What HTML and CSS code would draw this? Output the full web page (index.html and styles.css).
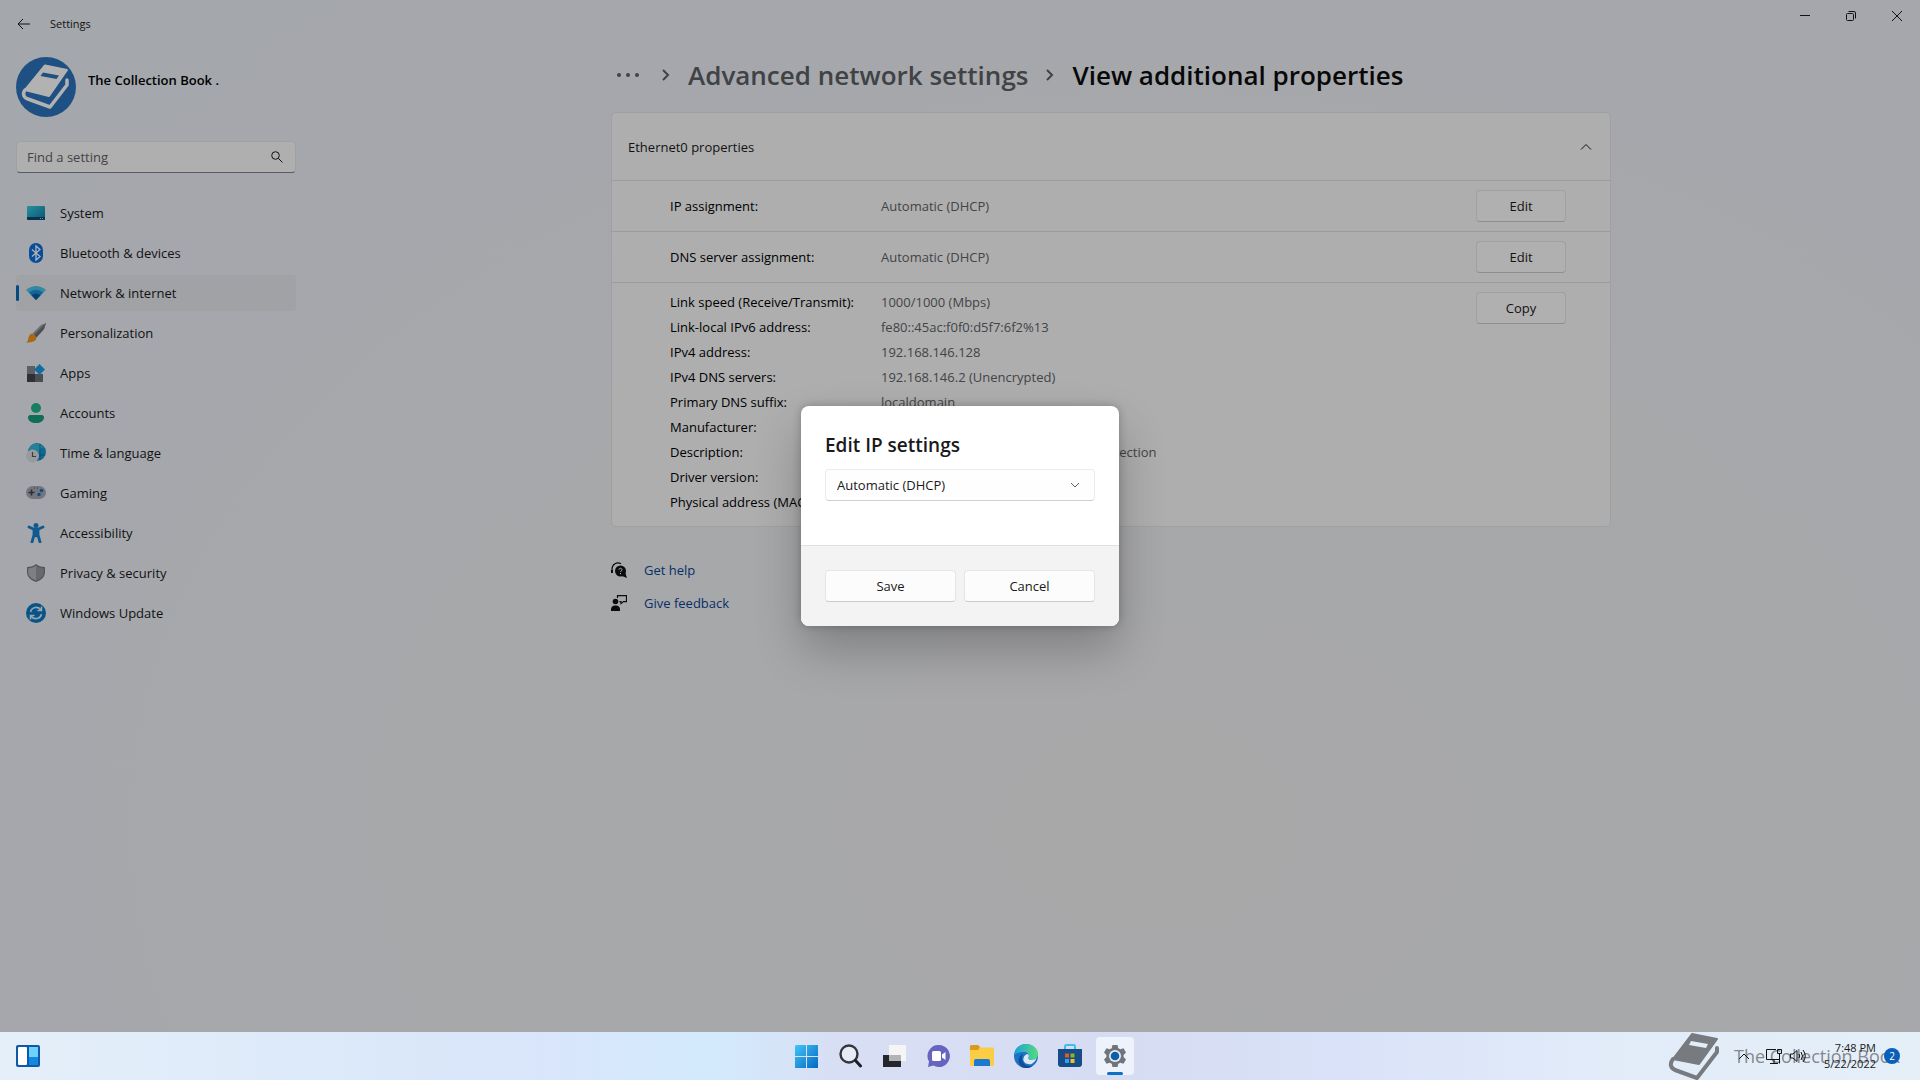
FILE: index.html
```html
<!DOCTYPE html>
<html lang="en">
  <head>
    <meta charset="UTF-8" />
    <meta name="viewport" content="width=device-width, initial-scale=1.0" />
    <title>Settings</title>
    <link rel="stylesheet" href="styles.css">
  </head>
  <body>
    <div class="window">
      <header class="titlebar">
        <button class="back" aria-label="Back">
          <svg width="14" height="12" viewBox="0 0 14 12"><path d="M13 6H1M6 1L1 6l5 5" /></svg>
        </button>
        <span class="app-name">Settings</span>
        <div class="window-controls">
          <button aria-label="Minimize">
            <svg width="10" height="10" viewBox="0 0 10 10"><path d="M0 4.5h10" /></svg>
          </button>
          <button aria-label="Restore">
            <svg width="10" height="10" viewBox="0 0 10 10"><rect x=".5" y="2.5" width="7" height="7" rx="1" /><path d="M2.5.5H8A1.5 1.5 0 0 1 9.500 2v5.500" /></svg>
          </button>
          <button aria-label="Close">
            <svg width="10" height="10" viewBox="0 0 10 10"><path d="M0 0l10 10M10 0L0 10" /></svg>
          </button>
        </div>
      </header>

      <div class="layout">
        <aside class="sidebar">
          <div class="profile">
            <svg class="avatar" width="60" height="60" viewBox="0 0 60 60">
              <circle cx="30" cy="30" r="30" fill="#2c73bd" />
              <path d="M29 8.500L51 13 33 39 9 33z" fill="#fff" stroke="#fff" stroke-width="2" stroke-linejoin="round" />
              <path d="M27 15.500l16 3-2.500 3.500-16-3z" fill="#2c73bd" />
              <path d="M9 33c-3 4-1 8 3 9l22 8 17-22v-5" fill="none" stroke="#fff" stroke-width="3.500" stroke-linejoin="round" stroke-linecap="round" />
            </svg>
            <span class="profile-name">The Collection Book .</span>
          </div>

          <div class="search">
            <input type="text" placeholder="Find a setting" aria-label="Find a setting" />
            <svg width="12" height="12" viewBox="0 0 12 12"><circle cx="4.500" cy="4.500" r="3.800" /><path d="M7.300 7.300L11.500 11.500" /></svg>
          </div>

          <nav class="menu">
            <a href="#">
              <svg width="20" height="20" viewBox="0 0 20 20">
                <defs><linearGradient id="sys" x1="0" y1="0" x2="1" y2="1"><stop offset="0" stop-color="#35d0e0" /><stop offset="1" stop-color="#1579a8" /></linearGradient></defs>
                <rect x="1" y="3" width="18" height="14" rx="1" fill="url(#sys)" />
                <path d="M1 14h18v2a1 1 0 0 1-1 1H2a1 1 0 0 1-1-1z" fill="#0c4a70" />
                <path d="M14 15.500h1M16 15.500h1" stroke="#9fd8e8" />
              </svg>
              System
            </a>
            <a href="#">
              <svg width="20" height="20" viewBox="0 0 20 20">
                <rect x="3" y="0" width="14" height="20" rx="7" fill="#0a6fe0" />
                <path d="M6 6.500l8 7-4 3.500V3l4 3.500-8 7" fill="none" stroke="#fff" stroke-width="1.300" />
              </svg>
              Bluetooth &amp; devices
            </a>
            <a href="#" class="active">
              <svg width="20" height="20" viewBox="0 0 20 20">
                <path d="M0 7Q10-1 20 7L10 17z" fill="#4cc3ea" />
                <path d="M3 9.500Q10 4 17 9.500L10 17z" fill="#1b91d6" />
                <path d="M5.500 12.200Q10 9 14.500 12.200L10 17z" fill="#0c5ca8" />
              </svg>
              Network &amp; internet
            </a>
            <a href="#">
              <svg width="20" height="20" viewBox="0 0 20 20">
                <path d="M20 0l-2 6-7.500 8.500-4-4L15 2z" fill="#9a9ca5" />
                <path d="M20 0l-12 12 2.500 2.500L18 6z" fill="#6e7078" />
                <path d="M6.500 10.500l4 4c0 3-3 5-10.500 5 2-1 2-3 2.500-5s2-4 4-4z" fill="#f2951e" />
              </svg>
              Personalization
            </a>
            <a href="#">
              <svg width="20" height="20" viewBox="0 0 20 20">
                <path d="M1 3h8v8H1z" fill="#84888f" />
                <path d="M1 11h8v8H1z" fill="#42464c" />
                <path d="M9 11h8v8H9z" fill="#6b6f76" />
                <path d="M13.500 1l5.500 5.500-5.500 5.500L8 6.500z" fill="#1e9be2" />
              </svg>
              Apps
            </a>
            <a href="#">
              <svg width="20" height="20" viewBox="0 0 20 20">
                <circle cx="10" cy="5" r="5" fill="#22b58c" />
                <path d="M4.500 12h11A2.500 2.500 0 0 1 18 14.500C18 18 14.500 20 10 20S2 18 2 14.500A2.500 2.500 0 0 1 4.500 12z" fill="#179d7c" />
              </svg>
              Accounts
            </a>
            <a href="#">
              <svg width="20" height="20" viewBox="0 0 20 20">
                <circle cx="11" cy="9" r="9" fill="#1899ce" />
                <path d="M3 6C6-1 15-1 18 4l-4 2-2 6-6-2z" fill="#35b9d8" />
                <path d="M14 1v16M11 12h8" stroke="#0c67a8" stroke-width=".8" />
                <circle cx="6.500" cy="13" r="6.500" fill="#dcdde0" />
                <path d="M6.500 9v4.500H10" fill="none" stroke="#54585e" stroke-width="1.200" />
              </svg>
              Time &amp; language
            </a>
            <a href="#">
              <svg width="20" height="20" viewBox="0 0 20 20">
                <rect y="3" width="20" height="13" rx="6.500" fill="#a5a9b2" />
                <path d="M5.500 6.500v6M2.500 9.500h6" stroke="#3f4349" stroke-width="1.600" />
                <path d="M8 5h1M11 5h1" stroke="#54585e" />
                <circle cx="15.500" cy="7.500" r="1.800" fill="#1c6ec4" />
                <circle cx="13" cy="11.500" r="1.800" fill="#1c6ec4" />
              </svg>
              Gaming
            </a>
            <a href="#">
              <svg width="20" height="20" viewBox="0 0 20 20">
                <circle cx="10" cy="2.500" r="2.500" fill="#1781cf" />
                <path d="M3 4l5 2.200h4L17 4M8 7v5l-2 7M12 7v5l2 7M10 6v7" fill="none" stroke="#1781cf" stroke-width="2.800" stroke-linecap="round" stroke-linejoin="round" />
              </svg>
              Accessibility
            </a>
            <a href="#">
              <svg width="20" height="20" viewBox="0 0 20 20">
                <path d="M10 1c2.500 2 5 3 9 3v5c0 5-4 8.500-9 10-5-1.500-9-5-9-10V4c4 0 6.500-1 9-3z" fill="#777b82" />
                <path d="M10 2.500v15C5.500 16 2.200 13 2.200 9V5.200c3.300 0 5.600-1 7.800-2.700z" fill="#b4b6bb" />
                <path d="M10 2.500v15c4.500-1.500 7.800-4.500 7.800-8.500V5.200c-3.300 0-5.600-1-7.800-2.700z" fill="#94979d" />
              </svg>
              Privacy &amp; security
            </a>
            <a href="#">
              <svg width="20" height="20" viewBox="0 0 20 20">
                <circle cx="10" cy="10" r="10" fill="#0f78c2" />
                <path d="M4.500 9A5.800 5.800 0 0 1 15 7M15.500 11A5.800 5.800 0 0 1 5 13M15.500 3.500v4h-4M4.500 16.500v-4h4" fill="none" stroke="#d8f0fb" stroke-width="1.600" />
              </svg>
              Windows Update
            </a>
          </nav>
        </aside>

        <main class="content">
          <h1 class="breadcrumb">
            <a href="#" class="more" aria-label="More">
              <svg width="24" height="6" viewBox="0 0 24 6"><circle cx="3" cy="3" r="2" /><circle cx="12" cy="3" r="2" /><circle cx="21" cy="3" r="2" /></svg>
            </a>
            <svg class="separator" width="8" height="12" viewBox="0 0 8 12"><path d="M1 1l5 5-5 5" /></svg>
            <a href="#">Advanced network settings</a>
            <svg class="separator" width="8" height="12" viewBox="0 0 8 12"><path d="M1 1l5 5-5 5" /></svg>
            <span>View additional properties</span>
          </h1>

          <section class="card">
            <button class="card-header">
              Ethernet0 properties
              <svg width="12" height="8" viewBox="0 0 12 8"><path d="M1 6.500l5-5 5 5" /></svg>
            </button>
            <div class="row">
              <span class="label">IP assignment:</span>
              <span class="value">Automatic (DHCP)</span>
              <button class="btn">Edit</button>
            </div>
            <div class="row">
              <span class="label">DNS server assignment:</span>
              <span class="value">Automatic (DHCP)</span>
              <button class="btn">Edit</button>
            </div>
            <div class="row details">
              <dl>
                <dt>Link speed (Receive/Transmit):</dt>
                <dd>1000/1000 (Mbps)</dd>
                <dt>Link-local IPv6 address:</dt>
                <dd>fe80::45ac:f0f0:d5f7:6f2%13</dd>
                <dt>IPv4 address:</dt>
                <dd>192.168.146.128</dd>
                <dt>IPv4 DNS servers:</dt>
                <dd>192.168.146.2 (Unencrypted)</dd>
                <dt>Primary DNS suffix:</dt>
                <dd>localdomain</dd>
                <dt>Manufacturer:</dt>
                <dd>Intel</dd>
                <dt>Description:</dt>
                <dd>Intel(R) 82574LM Gigabit Network Connection</dd>
                <dt>Driver version:</dt>
                <dd>12.18.9.23</dd>
                <dt>Physical address (MAC):</dt>
                <dd></dd>
              </dl>
              <button class="btn">Copy</button>
            </div>
          </section>

          <div class="links">
            <a href="#">
              <svg width="16" height="16" viewBox="0 0 16 16">
                <path d="M1 10V7a6 6 0 0 1 9-5.200" fill="none" stroke="#111" stroke-width="1.200" />
                <path d="M0 8h2v3H0z" fill="#111" />
                <circle cx="9.500" cy="9" r="5.500" fill="#111" />
                <path d="M11 14l5 2-2-6z" fill="#111" />
                <path d="M8 7.800c0-2 3-2 3 0 0 1.200-1.500 1-1.500 2.200M9.500 11v1.200" fill="none" stroke="#fff" />
              </svg>
              Get help
            </a>
            <a href="#">
              <svg width="16" height="16" viewBox="0 0 16 16">
                <circle cx="4.500" cy="6.500" r="2.800" fill="#111" />
                <path d="M0 16v-2a4 4 0 0 1 4-3.500h1A4 4 0 0 1 9 14v2z" fill="#111" />
                <path d="M6.500 3V.6h9v6h-3l-2.500 2v-2H8.500" fill="none" stroke="#111" stroke-width="1.200" />
              </svg>
              Give feedback
            </a>
          </div>
        </main>
      </div>

      <div class="scrim">
        <form class="dialog" role="dialog" aria-labelledby="dialog-title">
          <div class="dialog-body">
            <h2 id="dialog-title">Edit IP settings</h2>
            <div class="dropdown">
              <select aria-labelledby="dialog-title">
                <option>Automatic (DHCP)</option>
                <option>Manual</option>
              </select>
              <svg width="10" height="6" viewBox="0 0 10 6"><path d="M1 1l4 4 4-4" /></svg>
            </div>
          </div>
          <div class="dialog-actions">
            <button type="button" class="btn">Save</button>
            <button type="button" class="btn">Cancel</button>
          </div>
        </form>
      </div>
    </div>

    <footer class="taskbar">
      <button class="widgets" aria-label="Widgets">
        <svg width="24" height="22" viewBox="0 0 24 22">
          <rect width="24" height="22" rx="2" fill="#0e5aa8" />
          <rect x="2" y="2" width="9" height="18" rx="1" fill="#fff" />
          <path d="M13 2h9v10h-9z" fill="#6bd3fb" />
          <path d="M13 12h9v8h-9z" fill="#1687e0" />
        </svg>
      </button>

      <div class="apps">
        <button aria-label="Start">
          <svg width="24" height="24" viewBox="0 0 24 24">
            <defs><linearGradient id="win" gradientUnits="userSpaceOnUse" x1="0" y1="0" x2="24" y2="24"><stop offset="0" stop-color="#45c8f8" /><stop offset="1" stop-color="#0368c4" /></linearGradient></defs>
            <path d="M2 1h10v11H1V2zM13 1h11v11H13zM1 13h11v11H1zM13 13h11v11H13z" fill="url(#win)" />
          </svg>
        </button>
        <button aria-label="Search">
          <svg width="24" height="24" viewBox="0 0 24 24">
            <circle cx="11" cy="10" r="8.500" fill="#e6ebf5" stroke="#32363c" stroke-width="2.400" />
            <path d="M17.500 16.500l5 5.500" stroke="#1c1f24" stroke-width="3" stroke-linecap="round" />
          </svg>
        </button>
        <button aria-label="Task view">
          <svg width="24" height="24" viewBox="0 0 24 24">
            <path d="M1 11h18v12H1z" fill="#25272a" />
            <path d="M7 1h17v16H7z" fill="#f5f5f6" />
            <path d="M7 11h12v6H7z" fill="#b2b4b8" />
          </svg>
        </button>
        <button aria-label="Chat">
          <svg width="24" height="24" viewBox="0 0 24 24">
            <path d="M13 1a11 11 0 1 1-5.500 20.600L2 23l1-5.500A11 11 0 0 1 13 1z" fill="#6664bf" />
            <rect x="6" y="7" width="9" height="10" rx="1.500" fill="#fff" />
            <path d="M16 10.500L19.500 8v8L16 13.500z" fill="#fff" />
          </svg>
        </button>
        <button aria-label="File Explorer">
          <svg width="24" height="24" viewBox="0 0 24 24">
            <path d="M0 2.500A1.500 1.500 0 0 1 1.500 1H8l2.500 2.500H23a1 1 0 0 1 1 1V22H0z" fill="#fbcd45" />
            <path d="M0 2.500A1.500 1.500 0 0 1 1.500 1H8l2 2-2 3H0z" fill="#d99a1c" />
            <path d="M4 22v-5a2 2 0 0 1 2-2h12a2 2 0 0 1 2 2v5z" fill="#1a7ad0" />
          </svg>
        </button>
        <button aria-label="Edge">
          <svg width="24" height="24" viewBox="0 0 24 24">
            <defs><linearGradient id="edge" x1="0" y1="0" x2="1" y2="0"><stop offset="0" stop-color="#1b9fe0" /><stop offset="1" stop-color="#55dd76" /></linearGradient></defs>
            <circle cx="12" cy="12" r="12" fill="#1c72c4" />
            <path d="M0 11C1 4 6 0 12 0c7 0 12 5 12 10 0 4-3 6-6.500 6-3 0-4-1.500-3-3 1-3-1-5-4-5C6 8 2 9 0 11z" fill="url(#edge)" />
            <path d="M14.500 13c-1 1.500 0 3 3 3 2 0 4-.8 5-2-.8 3-3 5-5 6-5 1-9-2-8-6 .5-2.500 3-4 4.500-4 .8 1 1 2 .5 3z" fill="#dce6f5" />
            <path d="M9 10c-3 5 0 12 7 12 2 0 3-.5 4-1.500C17 24 12 25 8 23 3 19 4 12 9 10z" fill="#124c94" />
          </svg>
        </button>
        <button aria-label="Microsoft Store">
          <svg width="24" height="24" viewBox="0 0 24 24">
            <path d="M7 6V2.500A1.500 1.500 0 0 1 8.500 1h7A1.500 1.500 0 0 1 17 2.500V6" fill="none" stroke="#3cbef0" stroke-width="2" />
            <path d="M0 5h24v15a3 3 0 0 1-3 3H3a3 3 0 0 1-3-3z" fill="#174d86" />
            <path d="M7 9.500h4v4H7z" fill="#f0502a" />
            <path d="M12.500 9.500h4v4h-4z" fill="#80ba2a" />
            <path d="M7 15h4v4H7z" fill="#2ba5ec" />
            <path d="M12.500 15h4v4h-4z" fill="#fbbc20" />
          </svg>
        </button>
        <button class="running" aria-label="Settings">
          <svg width="24" height="24" viewBox="0 0 24 24">
            <path d="M9.500 1h5l.8 3.200 2 1.100 3.200-1L23 8.600l-2.400 2.300v2.200L23 15.400l-2.500 4.300-3.200-1-2 1.100-.8 3.200h-5l-.8-3.200-2-1.100-3.200 1L1 15.400l2.400-2.300v-2.200L1 8.600l2.500-4.300 3.200 1 2-1.100z" fill="#6f757c" />
            <circle cx="12" cy="12" r="6" fill="#e9edf3" />
            <circle cx="12" cy="12" r="4.300" fill="#0f5ea8" />
          </svg>
        </button>
      </div>

      <div class="tray">
        <button aria-label="Show hidden icons">
          <svg width="12" height="8" viewBox="0 0 12 8"><path d="M1 7l5-5 5 5" /></svg>
        </button>
        <button aria-label="Network">
          <svg width="16" height="16" viewBox="0 0 16 16"><path d="M10 1.500H.5v10H13M4 15.500h8M8 11.500v4M11.500 1.500h4v4h-4zM13.500 5.500v10" /></svg>
        </button>
        <button aria-label="Volume">
          <svg width="16" height="14" viewBox="0 0 16 14"><path d="M.5 5v4H3l4 3.500v-11L3 5zM9 5q1.500 2 0 4M11 3q3 4 0 8M13 1q4.500 6 0 12" /></svg>
        </button>
        <button class="clock">
          <span>7:48 PM</span>
          <span>5/22/2022</span>
        </button>
        <button class="badge">2</button>
      </div>

      <div class="watermark">
        <svg width="52" height="48" viewBox="0 0 52 48">
          <path d="M24 2l25 5-18 25L5 27z" fill="#777b80" stroke="#777b80" stroke-width="2" stroke-linejoin="round" />
          <path d="M23 9l17 3-2 4-17-3z" fill="#e4eef8" />
          <path d="M5 27c-4 5-2 9 2 11l22 8 20-26v-4" fill="none" stroke="#777b80" stroke-width="4" stroke-linejoin="round" stroke-linecap="round" />
        </svg>
        <span>The Collection Book</span>
      </div>
    </footer>
  </body>
</html>
```

FILE: styles.css
```css
* {
  margin: 0;
  padding: 0;
  box-sizing: border-box;
}

body {
  display: flex;
  flex-direction: column;
  height: 100vh;
  overflow: hidden;
  font-family: "Segoe UI", "Open Sans", "Noto Sans", sans-serif;
  font-size: 13px;
  line-height: 20px;
  color: #1a1a1a;
}

button,
input,
select {
  font: inherit;
  color: inherit;
  border: none;
  background: none;
}

a {
  color: inherit;
  text-decoration: none;
}

svg {
  flex-shrink: 0;
}

.window {
  position: relative;
  flex: 1;
  min-height: 0;
  background: radial-gradient(ellipse at 60% 80%, #f1f1f3 0%, #f0f1f4 40%, #ecf0f6 75%, #ebf0f6 100%);
}

/* title bar */
.titlebar {
  display: flex;
  align-items: center;
  height: 48px;
  padding-left: 12px;
}

.titlebar svg,
.search svg,
.card-header svg {
  fill: none;
  stroke: #1a1a1a;
}

.back {
  display: flex;
  justify-content: center;
  width: 24px;
}

.app-name {
  margin-left: 14px;
  font-size: 11px;
}

.window-controls {
  display: flex;
  align-self: flex-start;
  margin-left: auto;
}

.window-controls button {
  display: flex;
  align-items: center;
  justify-content: center;
  width: 46px;
  height: 32px;
}

.layout {
  display: flex;
}

/* sidebar */
.sidebar {
  width: 302px;
  padding: 9px 6px 0 16px;
}

.profile {
  display: flex;
  gap: 12px;
}

.profile-name {
  margin-top: 13px;
  font-weight: 600;
  color: #000;
}

.search {
  display: flex;
  align-items: center;
  height: 32px;
  margin: 24px 0 22px;
  padding: 0 12px 0 10px;
  background: #fbfbfc;
  border: 1px solid #e3e6ea;
  border-bottom-color: #80848a;
  border-radius: 4px;
}

.search input {
  flex: 1;
  min-width: 0;
  outline: none;
}

.search input::placeholder {
  color: #5f6266;
}

.menu {
  display: flex;
  flex-direction: column;
  gap: 4px;
}

.menu a {
  display: flex;
  align-items: center;
  gap: 14px;
  height: 36px;
  padding-left: 10px;
  border-radius: 4px;
}

.menu .active {
  position: relative;
  background: #e5e8ed;
}

.menu .active::before {
  content: "";
  position: absolute;
  left: 0;
  top: 10px;
  width: 3px;
  height: 16px;
  border-radius: 2px;
  background: #0a67b8;
}

/* main content */
.content {
  flex: 1;
  max-width: 1000px;
  margin: 0 auto;
}

.breadcrumb {
  display: flex;
  align-items: center;
  gap: 18px;
  height: 40px;
  margin: 7px 0 17px;
  padding-left: 5px;
  font-size: 26px;
  font-weight: 600;
  color: #0c0c0c;
}

.breadcrumb a {
  color: #5c5f63;
}

.more {
  display: flex;
  margin-right: 4px;
}

.more svg {
  fill: #5c5f63;
}

.separator {
  fill: none;
  stroke: #5c5f63;
  stroke-width: 2;
}

.card {
  background: #f9fafb;
  border: 1px solid #e2e5e9;
  border-radius: 5px;
}

.card-header {
  display: flex;
  align-items: center;
  justify-content: space-between;
  width: 100%;
  height: 67px;
  padding: 0 18px 0 16px;
}

.row {
  display: flex;
  align-items: center;
  height: 51px;
  padding: 0 44px 0 58px;
  border-top: 1px solid #dde0e4;
}

.label,
dt {
  color: #000;
}

.label {
  width: 211px;
}

.value,
dd {
  color: #606266;
}

.btn {
  width: 90px;
  height: 32px;
  background: #fcfcfc;
  border: 1px solid #e5e5e5;
  border-bottom-color: #cccccc;
  border-radius: 4px;
}

.row .btn {
  margin-left: auto;
}

.details {
  align-items: flex-start;
  height: auto;
  padding-top: 7px;
  padding-bottom: 11px;
}

.details dl {
  display: grid;
  grid-template-columns: 211px auto;
  grid-auto-rows: 25px;
  line-height: 25px;
}

.details .btn {
  margin-top: 2px;
}

.links {
  display: flex;
  flex-direction: column;
  gap: 13px;
  margin-top: 33px;
}

.links a {
  display: flex;
  align-items: center;
  align-self: flex-start;
  gap: 17px;
  color: #0b4594;
}

/* dialog */
.scrim {
  position: absolute;
  inset: 0;
  display: flex;
  align-items: center;
  justify-content: center;
  background: rgba(0, 0, 0, 0.3);
}

.dialog {
  width: 318px;
  overflow: hidden;
  background: #fff;
  border-radius: 8px;
  box-shadow: 0 24px 48px rgba(0, 0, 0, 0.24), 0 0 8px rgba(0, 0, 0, 0.24);
}

.dialog-body {
  padding: 24px 24px 44px;
}

.dialog h2 {
  margin-bottom: 8px;
  font-size: 19px;
  line-height: 31px;
  font-weight: 600;
}

.dropdown {
  position: relative;
}

.dropdown select {
  display: block;
  width: 100%;
  height: 32px;
  padding: 0 32px 0 11px;
  appearance: none;
  background: #fefefe;
  border: 1px solid #ececec;
  border-bottom-color: #d0d0d0;
  border-radius: 4px;
}

.dropdown svg {
  position: absolute;
  right: 15px;
  top: 13px;
  fill: none;
  stroke: #606060;
  pointer-events: none;
}

.dialog-actions {
  display: flex;
  gap: 8px;
  padding: 24px;
  background: #f3f3f3;
  border-top: 1px solid #e0e0e0;
}

.dialog-actions .btn {
  flex: 1;
}

/* taskbar */
.taskbar {
  position: relative;
  display: flex;
  align-items: center;
  justify-content: space-between;
  height: 48px;
  background: linear-gradient(90deg, #e4eff9 0%, #dce9f9 18%, #d9e5fa 28%, #d3eafd 37%, #d8def3 44%, #d6dcf2 58%, #d9e2f8 70%, #e2ecf9 84%, #e5eff8 100%);
}

.taskbar button {
  display: flex;
  align-items: center;
  justify-content: center;
}

.widgets {
  margin-left: 16px;
}

.apps {
  position: absolute;
  left: 50%;
  display: flex;
  transform: translateX(-50%);
}

.apps button {
  width: 44px;
  height: 48px;
}

.apps .running {
  position: relative;
  width: 38px;
  height: 38px;
  margin: 5px 2px 5px 4px;
  background: #eef2fb;
  border-radius: 4px;
}

.running::after {
  content: "";
  position: absolute;
  bottom: 0;
  width: 16px;
  height: 3px;
  border-radius: 2px;
  background: #0f6fc6;
}

.tray {
  position: relative;
  z-index: 1;
  display: flex;
  align-items: center;
  gap: 8px;
  padding-right: 20px;
}

.tray svg {
  fill: none;
  stroke: #111;
}

.tray button:first-child {
  margin-right: 8px;
}

.taskbar .clock {
  flex-direction: column;
  align-items: flex-end;
  margin-left: 10px;
  font-size: 11px;
  line-height: 16px;
}

.taskbar .badge {
  width: 16px;
  height: 16px;
  border-radius: 50%;
  background: #0a5fb8;
  color: #fff;
  font-size: 10px;
  line-height: 16px;
}

.watermark {
  position: absolute;
  right: 20px;
  display: flex;
  align-items: center;
  gap: 14px;
  font-size: 18px;
  color: #85898f;
}
```
